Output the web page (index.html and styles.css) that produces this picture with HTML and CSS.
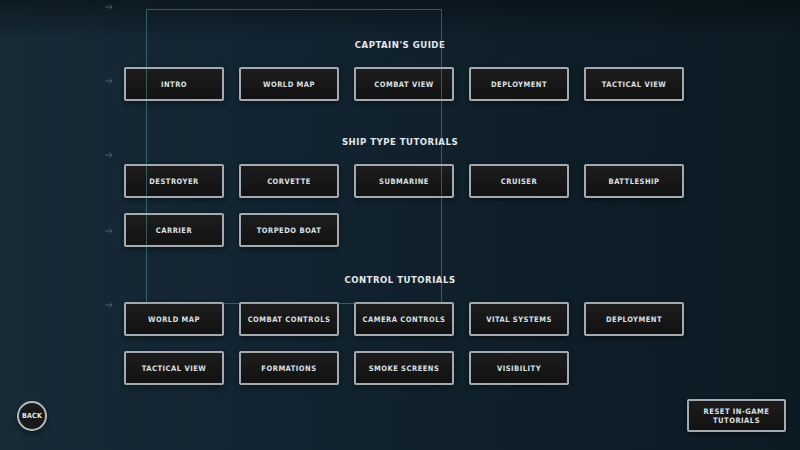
FILE: index.html
```html
<!DOCTYPE html>
<html lang="en">
<head>
<meta charset="utf-8">
<title>Tutorials</title>
<link rel="stylesheet" href="styles.css">
</head>
<body>
<div class="screen">
  <main class="menu">
    <section class="group group-first">
      <h2 class="group-title">CAPTAIN'S GUIDE</h2>
      <div class="grid">
        <button class="tile">INTRO</button>
        <button class="tile">WORLD MAP</button>
        <button class="tile">COMBAT VIEW</button>
        <button class="tile">DEPLOYMENT</button>
        <button class="tile">TACTICAL VIEW</button>
      </div>
    </section>
    <section class="group group-ships">
      <h2 class="group-title">SHIP TYPE TUTORIALS</h2>
      <div class="grid">
        <button class="tile">DESTROYER</button>
        <button class="tile">CORVETTE</button>
        <button class="tile">SUBMARINE</button>
        <button class="tile">CRUISER</button>
        <button class="tile">BATTLESHIP</button>
        <button class="tile">CARRIER</button>
        <button class="tile">TORPEDO BOAT</button>
      </div>
    </section>
    <section class="group group-controls">
      <h2 class="group-title">CONTROL TUTORIALS</h2>
      <div class="grid">
        <button class="tile">WORLD MAP</button>
        <button class="tile">COMBAT CONTROLS</button>
        <button class="tile">CAMERA CONTROLS</button>
        <button class="tile">VITAL SYSTEMS</button>
        <button class="tile">DEPLOYMENT</button>
        <button class="tile">TACTICAL VIEW</button>
        <button class="tile">FORMATIONS</button>
        <button class="tile">SMOKE SCREENS</button>
        <button class="tile">VISIBILITY</button>
      </div>
    </section>
  </main>

  <footer class="footer">
    <button class="back">BACK</button>
    <button class="tile reset">RESET IN-GAME<br>TUTORIALS</button>
  </footer>

  <!-- focus frame and row markers drawn over the menu -->
  <div class="focus-frame"></div>
  <svg class="marker m1" viewBox="0 0 10 10"><path d="M1 5H8M5.5 2.5L8 5L5.5 7.5"/></svg>
  <svg class="marker m2" viewBox="0 0 10 10"><path d="M1 5H8M5.5 2.5L8 5L5.5 7.5"/></svg>
  <svg class="marker m3" viewBox="0 0 10 10"><path d="M1 5H8M5.5 2.5L8 5L5.5 7.5"/></svg>
  <svg class="marker m4" viewBox="0 0 10 10"><path d="M1 5H8M5.5 2.5L8 5L5.5 7.5"/></svg>
  <svg class="marker m5" viewBox="0 0 10 10"><path d="M1 5H8M5.5 2.5L8 5L5.5 7.5"/></svg>
</div>
</body>
</html>
```

FILE: styles.css
```css
* { box-sizing: border-box; }

html, body {
  margin: 0;
  padding: 0;
  width: 800px;
  height: 450px;
  overflow: hidden;
}

body {
  font-family: "DejaVu Sans Condensed", "Liberation Sans", sans-serif;
  color: #dfe3e6;
  background: #112230;
}

.screen {
  position: relative;
  width: 800px;
  height: 450px;
  display: flex;
  flex-direction: column;
  background:
    linear-gradient(180deg, rgba(5, 12, 16, 0.55) 0px, rgba(5, 12, 16, 0) 40px),
    linear-gradient(90deg, #172a36 0%, #122431 35%, #0e1e29 70%, #0c1a23 100%);
}

.menu {
  display: flex;
  flex-direction: column;
  padding-top: 35px;
}

.group-ships { margin-top: 31px; }
.group-controls { margin-top: 23px; }

.group-title {
  margin: 0 0 12px;
  height: 20px;
  line-height: 20px;
  text-align: center;
  font-family: "DejaVu Sans Condensed", "Liberation Sans", sans-serif;
  font-size: 9.5px;
  font-weight: bold;
  letter-spacing: 0.5px;
  color: #e4e8eb;
}

.grid {
  display: grid;
  grid-template-columns: repeat(5, 100px);
  column-gap: 15px;
  row-gap: 15px;
  padding-left: 124px;
}

.tile {
  width: 100px;
  height: 34px;
  margin: 0;
  padding: 0;
  border: 2px solid #a3abb0;
  border-radius: 2px;
  background: linear-gradient(180deg, #1d1d1e 0%, #161617 60%, #121213 100%);
  color: #dde1e4;
  font-family: "DejaVu Sans Condensed", "Liberation Sans", sans-serif;
  font-size: 7.5px;
  font-weight: bold;
  letter-spacing: 0.5px;
  line-height: 9px;
  white-space: nowrap;
  text-align: center;
  box-shadow: 0 2px 6px rgba(0, 0, 0, 0.45);
}

.footer {
  margin-top: auto;
  display: flex;
  justify-content: space-between;
  align-items: flex-end;
  padding: 0 14px 18px 17px;
}

.back {
  width: 30px;
  height: 30px;
  margin: 0 0 1px;
  padding: 0;
  border: 2px solid #b3babe;
  border-radius: 50%;
  background: #18191a;
  color: #e6e9eb;
  font-family: "DejaVu Sans Condensed", "Liberation Sans", sans-serif;
  font-size: 7px;
  font-weight: bold;
  letter-spacing: 0.2px;
  box-shadow: 0 2px 5px rgba(0, 0, 0, 0.45);
}

.reset {
  width: 99px;
  height: 33px;
}

.focus-frame {
  position: absolute;
  left: 146px;
  top: 9px;
  width: 296px;
  height: 295px;
  border: 1px solid rgba(92, 170, 170, 0.45);
  pointer-events: none;
}

.marker {
  position: absolute;
  left: 104px;
  width: 10px;
  height: 10px;
  fill: none;
  stroke: #4a5e6a;
  stroke-width: 1;
  pointer-events: none;
}

.m1 { top: 2px; }
.m2 { top: 76px; }
.m3 { top: 150px; }
.m4 { top: 226px; }
.m5 { top: 300px; }
```
